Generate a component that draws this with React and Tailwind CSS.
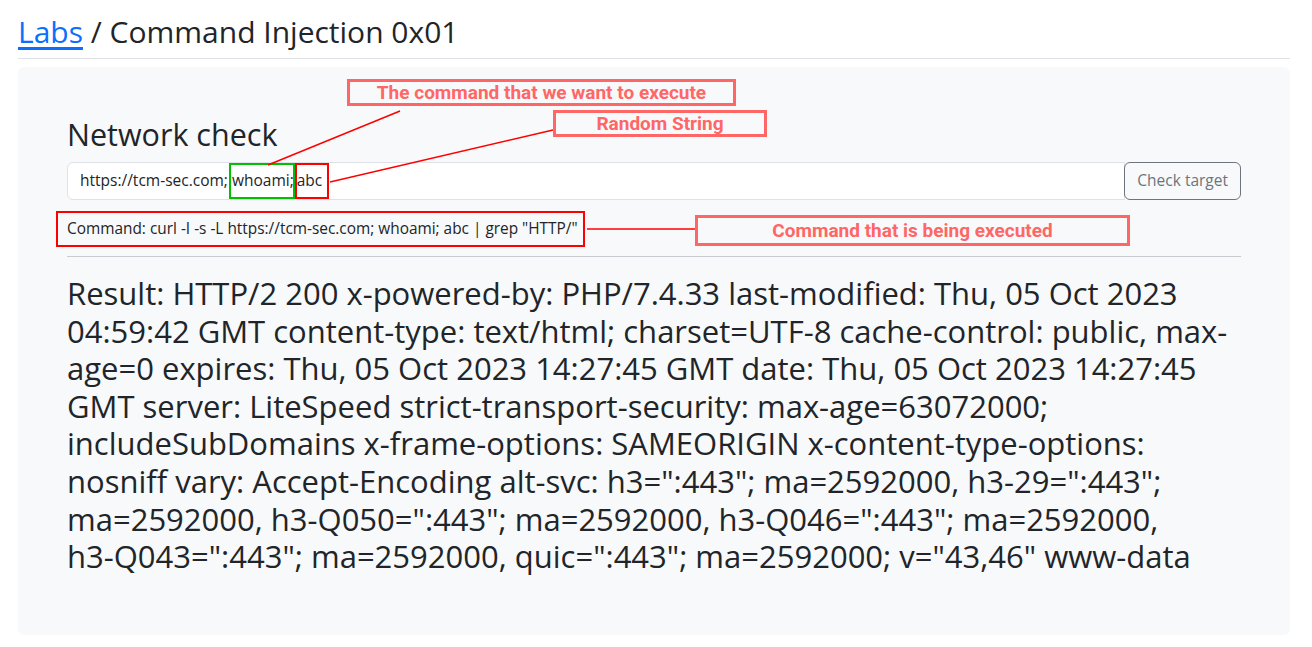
import React from 'react';

const resultHead =
  'Result: HTTP/2 200 x-powered-by: PHP/7.4.33 last-modified: Thu, 05 Oct 2023 04:59:42 GMT content-type: text/html; charset=UTF-8 cache-control: public, max-age=0 expires: Thu, 05 Oct 2023 14:27:45 GMT date: Thu, 05 Oct 2023 14:27:45 GMT server: LiteSpeed strict-transport-security: max-age=63072000; includeSubDomains x-frame-options: SAMEORIGIN x-content-type-options: nosniff vary: Accept-Encoding alt-svc: h3=":443"; ma=2592000, h3-29=":443"; ma=2592000, h3-Q050=":443"; ma=2592000, h3-Q046=":443"; ma=2592000, ';
const resultTail = 'ma=2592000, quic=":443"; ma=2592000; v="43,46" www-data';

const Callout = ({ className, children }) => (
  <div
    className={`absolute flex items-center justify-center border-[3px] border-[#ff6666] text-[#ff6666] text-[19px] font-bold leading-none ${className}`}
    style={{ fontFamily: 'Roboto, "Liberation Sans", sans-serif' }}
  >
    {children}
  </div>
);

export default function App() {
  return (
    <div
      className="relative w-[1312px] h-[647px] bg-white text-[#212529] overflow-hidden"
      style={{ fontFamily: '"Open Sans", "Noto Sans", sans-serif' }}
    >
      <div className="mx-[18px] w-[1272px]">
        {/* Breadcrumb title */}
        <h1 className="pt-[13px] pb-[7px] text-[30px] leading-[38px] border-b border-[#dee2e6]">
          <a href="#" className="text-[#0d6efd] underline underline-offset-[4px]">Labs</a> / Command Injection 0x01
        </h1>

        {/* Card */}
        <div className="mt-[8px] h-[568px] rounded-[6px] bg-[#f8f9fa] px-[49px] pt-[48px]">
          <h2 className="text-[30.5px] leading-[38px] mb-[9px]">Network check</h2>

          <div className="flex h-[38px]">
            <div className="flex-1 flex items-center bg-white border border-[#dee2e6] rounded-l-[6px] px-[12px] text-[15.5px]">
              <span>https://tcm-sec.com;</span>
              <span className="relative ml-[4px]">
                whoami;
                <span className="absolute -left-[3px] -right-[1px] -top-[6px] -bottom-[6px] border-2 border-[#00c000]" />
              </span>
              <span className="relative ml-[3px]">
                abc
                <span className="absolute -left-[2px] -right-[7px] -top-[6px] -bottom-[6px] border-2 border-[#ff0000]" />
              </span>
            </div>
            <button className="-ml-px px-[12px] border border-[#6c757d] rounded-[6px] text-[#6c757d] text-[15.5px] bg-transparent">
              Check target
            </button>
          </div>

          <div className="relative mt-[11px] h-[36px] flex items-center text-[15.4px]">
            Command: curl -I -s -L https://tcm-sec.com; whoami; abc | grep "HTTP/"
            <span className="absolute -left-[11px] top-0 w-[529px] h-[36px] border-2 border-[#ff0000]" />
          </div>

          <hr className="mt-[9px] border-0 border-t border-[#c8cbcf]" />

          <p className="mt-[18px] text-[31px] leading-[37.6px]">
            {resultHead}
            <span className="whitespace-nowrap">h3-Q043=":443";</span> {resultTail}
          </p>
        </div>
      </div>

      {/* Annotations */}
      <svg className="absolute inset-0 pointer-events-none" width="1312" height="647">
        <line x1="268" y1="165" x2="400" y2="111" stroke="#ff0000" strokeWidth="1.5" />
        <line x1="330" y1="182" x2="553" y2="130" stroke="#ff0000" strokeWidth="1.5" />
        <line x1="587" y1="229" x2="695" y2="229" stroke="#ff0000" strokeWidth="1.5" />
      </svg>
      <Callout className="left-[347px] top-[79px] w-[389px] h-[27px]">The command that we want to execute</Callout>
      <Callout className="left-[553px] top-[110px] w-[214px] h-[27px]">Random String</Callout>
      <Callout className="left-[695px] top-[215px] w-[435px] h-[31px]">Command that is being executed</Callout>
    </div>
  );
}
